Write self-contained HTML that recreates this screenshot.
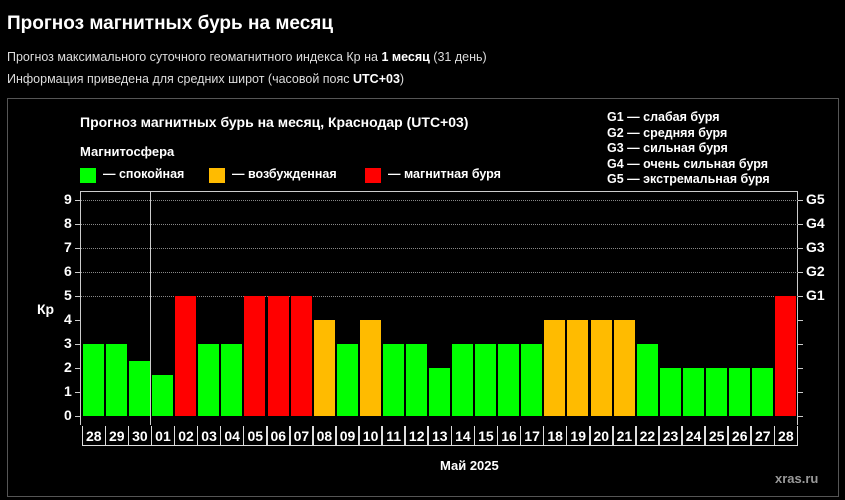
<!DOCTYPE html>
<html><head><meta charset="utf-8"><style>
body{margin:0;width:845px;height:500px;background:#000;overflow:hidden;font-family:"Liberation Sans",sans-serif;color:#fff;position:relative}
.a{position:absolute;white-space:nowrap}
.b{font-weight:bold}
.sub{color:#ddd;font-size:12.5px}
.grid{position:absolute;left:81px;width:717px;border-top:1px dotted #888;height:0}
.bar{position:absolute;bottom:84px}
.dl{position:absolute;top:426px;height:20px;border:1px solid #ddd;border-top:none;font-size:14px;font-weight:bold;text-align:center;line-height:20px;box-sizing:border-box}
</style></head><body>
<div class="a b" style="left:7px;top:13px;font-size:19px">Прогноз магнитных бурь на месяц</div>
<div class="a sub" style="left:7px;top:50px">Прогноз максимального суточного геомагнитного индекса Кр на <b style="color:#fff">1 месяц</b> (31 день)</div>
<div class="a sub" style="left:7px;top:72px">Информация приведена для средних широт (часовой пояс <b style="color:#fff">UTC+03</b>)</div>
<div class="a" style="left:7px;top:98px;width:830px;height:397px;border:1px solid #555"></div>
<div class="a b" style="left:80px;top:114px;font-size:14px">Прогноз магнитных бурь на месяц, Краснодар (UTC+03)</div>
<div class="a b" style="left:80px;top:144px;font-size:13px">Магнитосфера</div>
<div class="a" style="left:80px;top:168px;width:16px;height:15px;background:#0f0"></div>
<div class="a b" style="left:103px;top:167px;font-size:12.5px">— спокойная</div>
<div class="a" style="left:209px;top:168px;width:16px;height:15px;background:#fb0"></div>
<div class="a b" style="left:232px;top:167px;font-size:12.5px">— возбужденная</div>
<div class="a" style="left:365px;top:168px;width:16px;height:15px;background:#f00"></div>
<div class="a b" style="left:388px;top:167px;font-size:12.5px">— магнитная буря</div>
<div class="a b" style="left:607px;top:110px;font-size:12.5px;line-height:15.5px">G1 — слабая буря<br>G2 — средняя буря<br>G3 — сильная буря<br>G4 — очень сильная буря<br>G5 — экстремальная буря</div>
<div class="a" style="left:80px;top:191px;width:718px;height:234px;border:1px solid #ccc;border-bottom:none;box-sizing:border-box"></div>
<div class="a" style="left:150px;top:191px;width:1px;height:234px;background:#ccc"></div>
<div class="a b" style="left:37px;top:301px;font-size:14px">Кр</div>
<div class="a b" style="left:440px;top:458px;font-size:13px">Май 2025</div>
<div class="a b" style="left:775px;top:471px;font-size:13px;color:#999">xras.ru</div>
<div id="c"></div>
<script>
var c=document.getElementById('c'),h='';
for(var i=0;i<=9;i++){var y=416-24*i;
h+='<div class="a b" style="left:64px;top:'+(y-9)+'px;font-size:14px">'+i+'</div><div class="a" style="left:75px;top:'+y+'px;width:5px;height:1px;background:#ccc"></div><div class="a" style="left:798px;top:'+y+'px;width:5px;height:1px;background:#ccc"></div>';
if(i>=5){h+='<div class="grid" style="top:'+y+'px"></div><div class="a b" style="left:806px;top:'+(y-9)+'px;font-size:14px">G'+(i-4)+'</div>';}}
var d=['28','29','30','01','02','03','04','05','06','07','08','09','10','11','12','13','14','15','16','17','18','19','20','21','22','23','24','25','26','27','28'];
var v=[3,3,2.3,1.7,5,3,3,5,5,5,4,3,4,3,3,2,3,3,3,3,4,4,4,4,3,2,2,2,2,2,5];
for(var j=0;j<31;j++){var x=82+j*23.07;var val=v[j];
var col=val>=5?'#f00':(val>=4?'#fb0':'#0f0');
h+='<div class="bar" style="left:'+(x+1)+'px;width:21px;height:'+(val*24)+'px;background:'+col+';bottom:84px"></div>';
h+='<div class="dl" style="left:'+x+'px;width:23.5px">'+d[j]+'</div>';}
c.innerHTML=h;
</script>
</body></html>
